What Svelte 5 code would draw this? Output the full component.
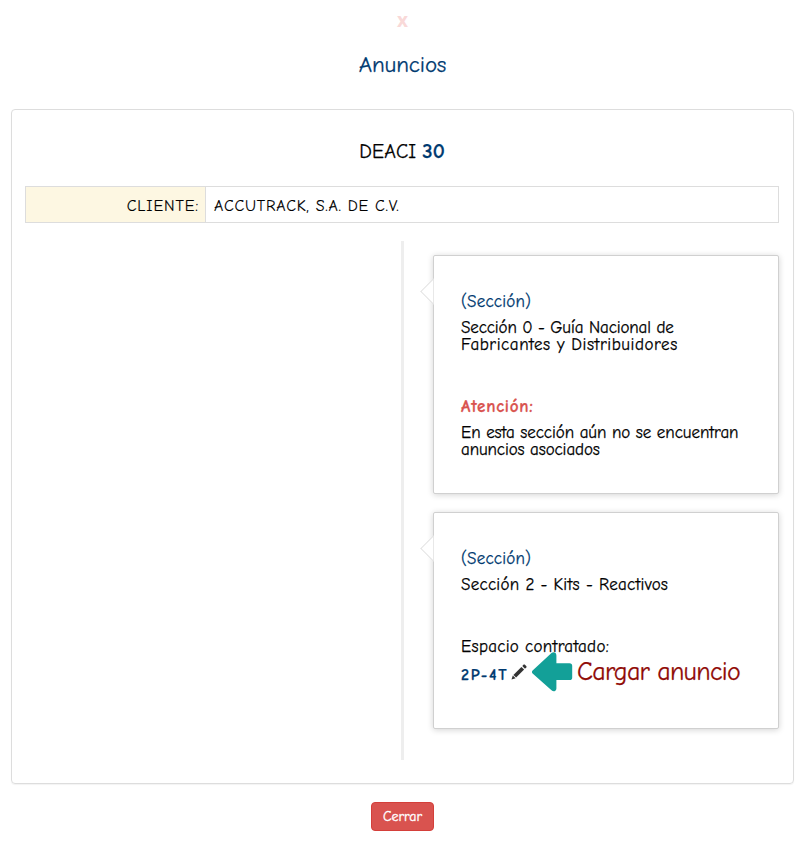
<script>
  const client = 'ACCUTRACK, S.A. DE C.V.';
</script>

<main>
  <button class="dismiss">x</button>
  <h1>Anuncios</h1>

  <section class="panel">
    <h2><span class="name">DEACI</span><b>30</b></h2>

    <div class="client">
      <div class="label"><span>CLIENTE:</span></div>
      <div class="value"><span>{client}</span></div>
    </div>

    <div class="timeline">
      <div class="half"></div>
      <div class="rail"></div>
      <div class="cards">
        <article class="first">
          <p class="kind"><span class="t1">(Sección)</span></p>
          <p class="text"><span class="t2">Sección 0 - Guía Nacional de</span><br /><span class="t3">Fabricantes y Distribuidores</span></p>
          <p class="warn"><span class="t4">Atención:</span></p>
          <p class="text"><span class="t5">En esta sección aún no se encuentran</span><br /><span class="t6">anuncios asociados</span></p>
        </article>
        <article class="second">
          <p class="kind"><span class="t1">(Sección)</span></p>
          <p class="text"><span class="t7">Sección 2 - Kits - Reactivos</span></p>
          <p class="space"><span class="t8">Espacio contratado:</span></p>
          <div class="slot">
            <b>2P-4T</b>
            <svg class="pencil" width="16" height="16" viewBox="0 0 16 16" fill="#333">
              <path d="M0.5 15.5L1.8 11.4L4.6 14.2Z" />
              <path d="M2.4 10.9L10.4 2.9L13.1 5.6L5.1 13.6Z" />
              <path d="M11.3 2L12.7 0.6Q13.2 0.2 13.7 0.6L15.4 2.3Q15.8 2.8 15.4 3.3L14 4.7Z" />
            </svg>
            <div class="callout">
              <svg width="41" height="40" viewBox="0 0 41 40" fill="#13a098">
                <path d="M0.6 18.4L19.5 1.1Q21.3-.4 23.2.8Q24.4 1.6 24.4 3.5V11.2H37.5Q40.2 11.2 40.2 13.8V25.4Q40.2 28 37.5 28H24.4V36.5Q24.4 38.4 23 39Q21.2 39.7 19.5 38.2L.6 21.5Q-.8 20 .6 18.4Z" />
              </svg>
              <span>Cargar anuncio</span>
            </div>
          </div>
        </article>
      </div>
    </div>
  </section>

  <button class="close"><span>Cerrar</span></button>
</main>

<style>
  :global(body) { background: #fff; }
  main {
    box-sizing: border-box;
    width: 801px;
    height: 843px;
    padding: 9px 7px 0 11px;
    display: flex;
    flex-direction: column;
    align-items: center;
    overflow: hidden;
    color: #000;
    font-family: "Comic Sans MS", "Comic Neue", "Open Sans", "Noto Sans", sans-serif;
    font-size: 17px;
    -webkit-text-stroke: .25px currentColor;
  }
  h1, h2, p { margin: 0; font-weight: 400; }
  span, b { white-space: nowrap; }
  button { border: 0; font-family: inherit; }
  .dismiss {
    height: 22px;
    padding: 0;
    background: none;
    color: #f9d9d8;
    font-family: "Open Sans", sans-serif;
    font-size: 19px;
    line-height: 20px;
    font-weight: 700;
    -webkit-text-stroke-width: 0;
  }
  h1 {
    margin-top: 18px;
    height: 30px;
    line-height: 31px;
    font-size: 23px;
    color: #003a70;
    letter-spacing: -.1px;
  }
  .panel {
    box-sizing: border-box;
    width: 783px;
    height: 675px;
    margin-top: 30px;
    padding: 27px 14px 0 13px;
    border: 1px solid #ddd;
    border-radius: 4px;
    box-shadow: 0 1px 1px rgba(0, 0, 0, .05);
  }
  h2 {
    display: flex;
    justify-content: center;
    gap: 6px;
    height: 28px;
    line-height: 29px;
    font-size: 20px;
  }
  h2 .name { letter-spacing: .15px; }
  h2 b { color: #003a70; font-size: 21px; }
  .client {
    box-sizing: border-box;
    display: flex;
    height: 37px;
    margin-top: 21px;
    border: 1px solid #ddd;
    font-size: 16px;
    line-height: 38px;
    -webkit-text-stroke-width: .1px;
  }
  .label, .value { height: 35px; }
  .label {
    box-sizing: border-box;
    width: 180px;
    padding-right: 6px;
    border-right: 1px solid #ddd;
    background: #fdf7e2;
    text-align: right;
    letter-spacing: .9px;
  }
  .value { padding-left: 8px; letter-spacing: .72px; }
  .timeline { display: flex; margin-top: 18px; height: 519px; }
  .half { width: 376px; }
  .rail { width: 3px; background: #eee; }
  .cards { flex: 1; padding: 14px 0 0 29px; }
  article {
    position: relative;
    box-sizing: border-box;
    width: 346px;
    padding: 37px 27px 0;
    border: 1px solid #d0d0d0;
    border-radius: 2px;
    background: #fff;
    box-shadow: 0 1px 6px rgba(0, 0, 0, .175);
  }
  article::before {
    content: "";
    position: absolute;
    left: -10px;
    top: 26px;
    width: 18px;
    height: 18px;
    border-left: 1px solid #ddd;
    border-bottom: 1px solid #ddd;
    background: #fff;
    transform: rotate(45deg);
    clip-path: polygon(0 0, 100% 100%, 0 100%);
  }
  .first { height: 239px; }
  .second { height: 217px; margin-top: 18px; }
  p { line-height: 17px; }
  .kind { color: #003a70; }
  .text { margin-top: 9px; }
  .warn { margin-top: 45px; color: #d9534f; font-weight: 700; }
  .space { margin-top: 45px; }
  .t1 { letter-spacing: .2px; }
  .t2 { letter-spacing: -.12px; }
  .t3 { letter-spacing: .55px; }
  .t4 { letter-spacing: .75px; }
  .t5 { letter-spacing: -.06px; }
  .t6 { letter-spacing: -.1px; }
  .t7 { letter-spacing: .27px; }
  .t8 { letter-spacing: .28px; }
  .slot { display: flex; align-items: center; height: 40px; margin-top: -3px; }
  .slot b { width: 50px; margin-top: 5px; color: #003a70; font-size: 16px; letter-spacing: 1.7px; }
  .pencil { margin: 0; }
  .callout { display: flex; align-items: center; gap: 4px; margin-left: 5px; color: #900a06; font-size: 26px; }
  .callout span { letter-spacing: -.7px; }
  .close {
    box-sizing: border-box;
    width: 63px;
    height: 29px;
    margin-top: 18px;
    padding: 0;
    border: 1px solid #d43f3a;
    border-radius: 4px;
    background: #d9534f;
    color: #fff;
    font-size: 14px;
    line-height: 27px;
    -webkit-text-stroke-width: .35px;
  }
</style>
